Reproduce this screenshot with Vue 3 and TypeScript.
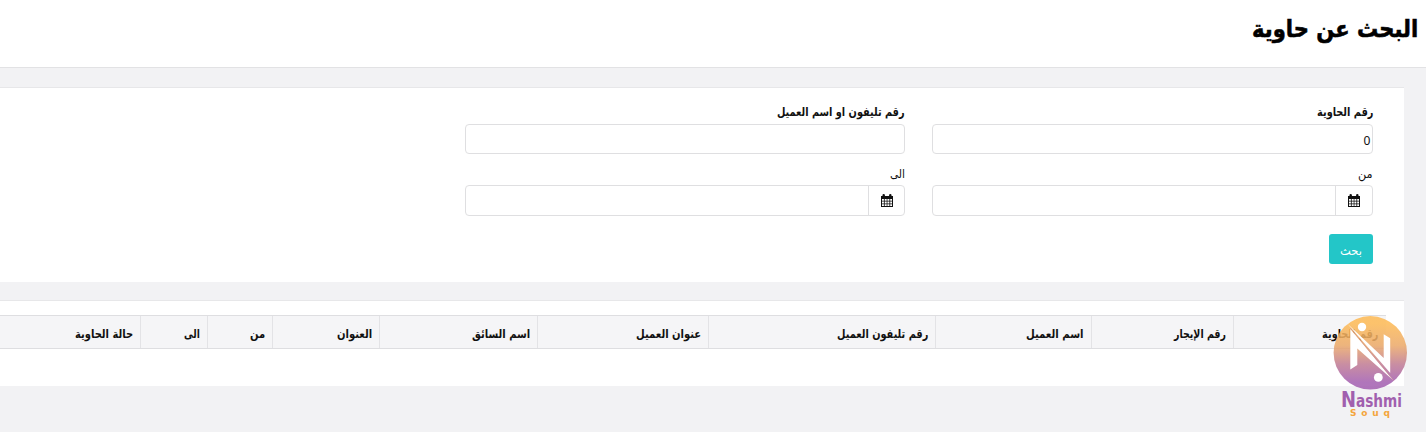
<script setup lang="ts">
import type { Directive } from 'vue'

interface Column { title: string; span: number; text: number }

const columns: Column[] = [
  { title: 'رقم الحاوية', span: 153, text: 56 },
  { title: 'رقم الإيجار', span: 142, text: 52 },
  { title: 'اسم العميل', span: 156, text: 58 },
  { title: 'رقم تليفون العميل', span: 227, text: 91 },
  { title: 'عنوان العميل', span: 171, text: 65 },
  { title: 'اسم السائق', span: 158, text: 58 },
  { title: 'العنوان', span: 107, text: 35 },
  { title: 'من', span: 65, text: 15 },
  { title: 'الى', span: 67, text: 16 },
  { title: 'حالة الحاوية', span: 140, text: 58 },
]

// Condenses a label horizontally to the given width, anchored at its right edge.
const vFit: Directive<HTMLElement, number> = {
  mounted(el, { value }) {
    el.style.transform = `scaleX(${value / el.offsetWidth})`
  },
}
</script>

<template>
  <div class="page" dir="rtl">
    <header class="top"><h1><span v-fit="166" class="fit">البحث عن حاوية</span></h1></header>

    <section class="panel search">
      <div class="grid">
        <div class="field">
          <label class="bold"><span v-fit="56" class="fit">رقم الحاوية</span></label>
          <div class="input"><span class="value"><span v-fit="6.500" class="fit">0</span></span></div>
        </div>
        <div class="field">
          <label class="bold"><span v-fit="128" class="fit">رقم تليفون او اسم العميل</span></label>
          <div class="input"></div>
        </div>
        <div v-for="name in ['من', 'الى']" :key="name" class="field">
          <label class="plain"><span v-fit="15" class="fit">{{ name }}</span></label>
          <div class="input date">
            <span class="addon">
              <svg width="12" height="13" viewBox="0 0 12 13">
                <path fill="#111" fill-rule="evenodd" d="M0 2h1.500V1q0-1 1.200-1t1.200 1v1h4.200V1q0-1 1.200-1t1.200 1v1H12V13H0zM1 5v1.800h1.900V5zm2.700 0v1.800h2V5zm2.700 0v1.800h2V5zm2.800 0v1.800H11V5zM1 7.500v2h1.900v-2zm2.700 0v2h2v-2zm2.700 0v2h2v-2zm2.800 0v2H11v-2zM1 10.200V12h1.900v-1.800zm2.700 0V12h2v-1.800zm2.700 0V12h2v-1.800zm2.800 0V12H11v-1.800z" />
              </svg>
            </span>
          </div>
        </div>
      </div>
      <button type="button"><span v-fit="22" class="fit">بحث</span></button>
    </section>

    <section class="panel results">
      <div class="thead">
        <div v-for="(c, i) in columns" :key="i" class="th" :style="{ width: c.span + 'px' }">
          <span v-fit="c.text" class="fit">{{ c.title }}</span>
        </div>
      </div>
    </section>

    <div class="brand" dir="ltr">
      <svg width="76" height="112" viewBox="0 0 76 112">
        <defs>
          <linearGradient id="sunset" x1="0" y1="0" x2="0" y2="1">
            <stop offset="0.1" stop-color="#fdba55" />
            <stop offset="0.4" stop-color="#eba969" />
            <stop offset="0.65" stop-color="#c17c92" />
            <stop offset="0.9" stop-color="#a35fb0" />
          </linearGradient>
        </defs>
        <circle cx="38.300" cy="38.800" r="36.700" fill="url(#sunset)" fill-opacity="0.86" />
        <g fill="#fff">
          <circle cx="30" cy="13" r="4.200" />
          <circle cx="46.300" cy="63.400" r="4.400" />
          <path d="M18.300 15 L61.500 66.500 L25.300 34.500 V51 L18.300 55.500 Z" />
          <path d="M15.700 10 L51.700 44 V20.300 L58.200 24.300 V59 Z" />
        </g>
        <path d="M18.300 14 L61.500 66.500" stroke="#c9898c" stroke-width="0.6" />
        <text class="nashmi big" x="9" y="93" textLength="15" lengthAdjust="spacingAndGlyphs">N</text>
        <text class="nashmi" x="24" y="93" textLength="46" lengthAdjust="spacingAndGlyphs">ashmi</text>
        <text class="souq" x="18" y="102" textLength="40">Souq</text>
      </svg>
    </div>
  </div>
</template>

<style>
body { margin: 0; background: #f2f2f4; }
</style>

<style scoped>
.page { position: relative; height: 432px; overflow: hidden; background: #f2f2f4; color: #111; font: 12px/16px "DejaVu Sans", sans-serif; }
.fit { display: inline-block; white-space: nowrap; transform-origin: 100% 50%; }
.top { box-sizing: border-box; height: 68px; padding: 11px 8px 0; background: #fff; border-bottom: 1px solid #e2e2e4; }
h1 { margin: 0; color: #000; font-size: 24px; line-height: 36px; font-weight: 700; -webkit-text-stroke: 0.6px #000; }
.panel { box-sizing: border-box; margin-right: 22px; background: #fff; border-top: 1px solid #e7e7e9; }
.search { height: 195px; margin-top: 19px; padding: 16px 31px 0 0; }
.grid { display: grid; grid-template-columns: 441px 440px; column-gap: 27px; row-gap: 11px; }
label { display: block; height: 20px; line-height: 17px; }
.bold { font-weight: 700; }
.plain { line-height: 19px; }
.input { box-sizing: border-box; height: 30px; display: flex; border: 1px solid #dfdfe1; border-radius: 4px; background: #fff; }
.date { height: 31px; }
.value { padding: 6px 2px 0; font: 13px/18px "Noto Sans", sans-serif; }
.addon { box-sizing: border-box; width: 37px; display: flex; align-items: center; justify-content: center; border-left: 1px solid #dfdfe1; }
.field:last-child .addon { width: 36px; }
button { display: block; width: 44px; height: 30px; margin: 18px 0 0; padding: 4px 11px 0; border: 0; border-radius: 3px; background: #23c6c8; color: #fff; font: 12px/18px "DejaVu Sans", sans-serif; text-align: right; }
.results { height: 86px; margin-top: 18px; padding: 14px 18px 0 0; }
.thead { box-sizing: border-box; height: 34px; display: flex; background: #f5f5f7; border: solid #dedee1; border-width: 1px 0; }
.th { box-sizing: border-box; flex: none; padding: 10px 7px 0; border-left: 1px solid #e3e3e6; font-weight: 700; }
.th:first-child { padding-right: 8px; }
.th:last-child { border-left: 0; }
.brand { position: absolute; left: 1332px; top: 314px; }
.brand svg { display: block; overflow: visible; }
.nashmi { font: 700 17px "DejaVu Sans", sans-serif; fill: #a15fae; }
.nashmi.big { font-size: 21px; }
.souq { font: 700 9px "DejaVu Sans", sans-serif; fill: #f4a53c; }
</style>
